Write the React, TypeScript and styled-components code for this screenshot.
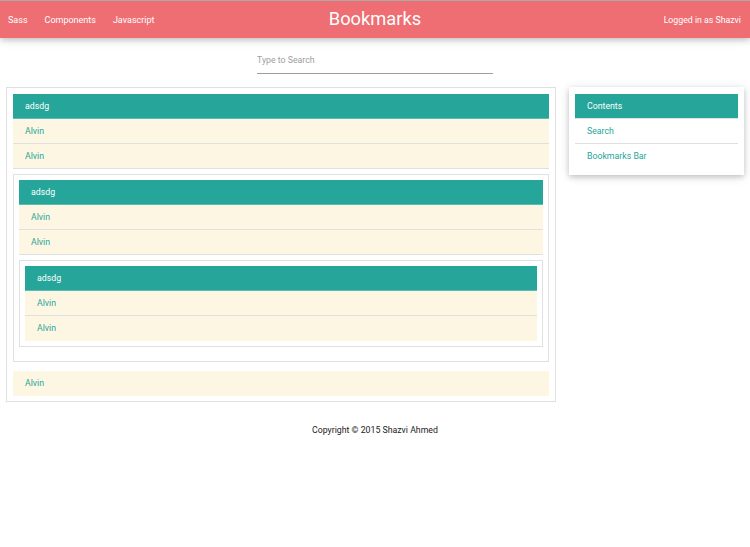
import styled, { createGlobalStyle } from "styled-components";

const GlobalStyle = createGlobalStyle`
  html, body {
    margin: 0;
    padding: 0;
    background: #fff;
    font-family: Roboto, "Liberation Sans", sans-serif;
  }
  * {
    box-sizing: border-box;
  }
`;

const teal = "#26a69a";
const cream = "#fdf6e3";
const divider = "#e0e0e0";
const small = "8.75px";

const Page = styled.div`
  width: 750px;
  min-height: 547px;
  display: flex;
  flex-direction: column;
`;

const NavBar = styled.nav`
  height: 38px;
  background: #ee6e73;
  border-top: 1px solid #a9a9a9;
  box-shadow: 0 2px 5px 0 rgba(0, 0, 0, 0.16), 0 2px 10px 0 rgba(0, 0, 0, 0.12);
  display: grid;
  grid-template-columns: 1fr auto 1fr;
  align-items: center;
  color: #fff;
`;

const NavLinks = styled.ul`
  display: flex;
  gap: 1px;
  list-style: none;
  margin: 0;
  padding: 0;
`;

const NavLink = styled.li`
  font-size: 9px;
  padding: 0 8px;
  line-height: 36px;
`;

const Brand = styled.div`
  font-size: 18.3px;
  line-height: 36px;
  padding-bottom: 1px;
`;

const UserInfo = styled.div`
  justify-self: end;
  font-size: ${small};
  padding-right: 9px;
`;

const SearchWrap = styled.div`
  display: flex;
  justify-content: center;
  padding: 9px 0 13px;
`;

const SearchInput = styled.input`
  width: 236px;
  height: 27px;
  border: none;
  border-bottom: 1px solid #9e9e9e;
  outline: none;
  padding: 0;
  font-family: Roboto, "Liberation Sans", sans-serif;
  font-size: ${small};
  color: #333;
  background: transparent;

  &::placeholder {
    color: #9e9e9e;
  }
`;

const Content = styled.div`
  display: flex;
  align-items: flex-start;
  gap: 13px;
  padding: 0 6px;
`;

const Panel = styled.div<{ $nested?: boolean }>`
  border: 1px solid ${divider};
  ${(p) =>
    p.$nested
      ? "margin: 5px 0 9px; padding: 5px;"
      : "width: 550px; padding: 6px 6px 5px;"}
`;

const Item = styled.div<{ $head?: boolean }>`
  height: 25px;
  display: flex;
  align-items: center;
  padding: 0 12px;
  font-size: ${small};
  background: ${(p) => (p.$head ? teal : cream)};
  color: ${(p) => (p.$head ? "#fff" : teal)};
  border-bottom: 1px solid ${(p) => (p.$head ? "rgba(255,255,255,0.25)" : divider)};

  &:last-child {
    border-bottom-color: transparent;
  }
`;

const Sidebar = styled.aside`
  width: 175px;
  padding: 7px 6px 6px;
  background: #fff;
  box-shadow: 0 2px 5px 0 rgba(0, 0, 0, 0.16), 0 2px 10px 0 rgba(0, 0, 0, 0.12);
`;

const SideItem = styled.div<{ $head?: boolean }>`
  height: 25px;
  display: flex;
  align-items: center;
  padding: 0 12px;
  font-size: ${small};
  background: ${(p) => (p.$head ? teal : "#fff")};
  color: ${(p) => (p.$head ? "#fff" : teal)};
  border-bottom: 1px solid ${divider};

  &:last-child {
    border-bottom-color: transparent;
  }
`;

const Footer = styled.footer`
  text-align: center;
  font-size: ${small};
  color: #222;
  padding-top: 23px;
`;

type Folder = {
  title: string;
  links: string[];
  child?: Folder;
};

const tree: Folder = {
  title: "adsdg",
  links: ["Alvin", "Alvin"],
  child: {
    title: "adsdg",
    links: ["Alvin", "Alvin"],
    child: {
      title: "adsdg",
      links: ["Alvin", "Alvin"],
    },
  },
};

const FolderView = ({ folder }: { folder: Folder }) => (
  <>
    <Item $head>{folder.title}</Item>
    {folder.links.map((l, i) => (
      <Item key={i}>{l}</Item>
    ))}
    {folder.child && (
      <Panel $nested>
        <FolderView folder={folder.child} />
      </Panel>
    )}
  </>
);

const App = () => {
  return (
    <Page>
      <GlobalStyle />
      <NavBar>
        <NavLinks>
          <NavLink>Sass</NavLink>
          <NavLink>Components</NavLink>
          <NavLink>Javascript</NavLink>
        </NavLinks>
        <Brand>Bookmarks</Brand>
        <UserInfo>Logged in as Shazvi</UserInfo>
      </NavBar>
      <SearchWrap>
        <SearchInput placeholder="Type to Search" />
      </SearchWrap>
      <Content>
        <Panel>
          <FolderView folder={tree} />
          <Item>Alvin</Item>
        </Panel>
        <Sidebar>
          <SideItem $head>Contents</SideItem>
          <SideItem>Search</SideItem>
          <SideItem>Bookmarks Bar</SideItem>
        </Sidebar>
      </Content>
      <Footer>Copyright © 2015 Shazvi Ahmed</Footer>
    </Page>
  );
};

export default App;
